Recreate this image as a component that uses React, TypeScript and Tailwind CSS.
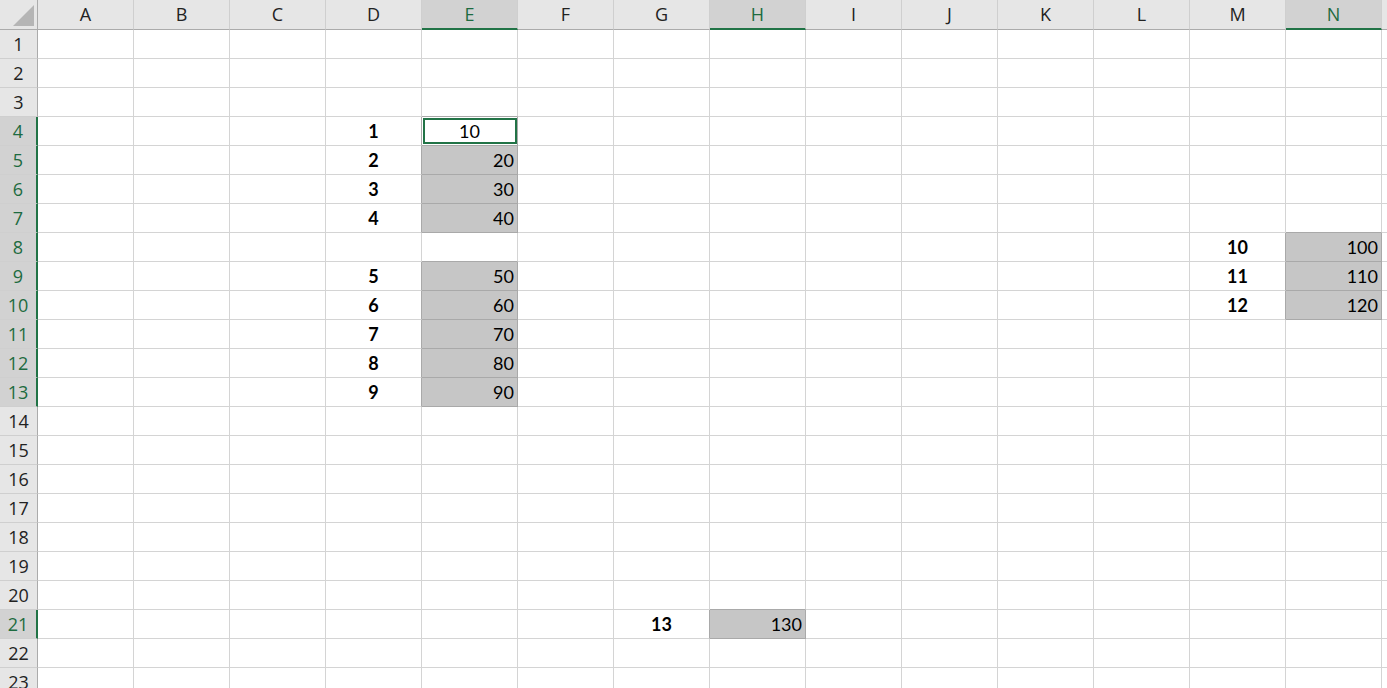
import React from 'react';

const COLS = 'ABCDEFGHIJKLMN'.split('');
const ROWS = Array.from({ length: 23 }, (_, i) => i + 1);

type CellData = { v: string; bold?: boolean; align: 'center' | 'right' };

const data: Record<string, CellData> = {
  D4: { v: '1', bold: true, align: 'center' },
  D5: { v: '2', bold: true, align: 'center' },
  D6: { v: '3', bold: true, align: 'center' },
  D7: { v: '4', bold: true, align: 'center' },
  D9: { v: '5', bold: true, align: 'center' },
  D10: { v: '6', bold: true, align: 'center' },
  D11: { v: '7', bold: true, align: 'center' },
  D12: { v: '8', bold: true, align: 'center' },
  D13: { v: '9', bold: true, align: 'center' },
  E4: { v: '10', align: 'center' },
  E5: { v: '20', align: 'right' },
  E6: { v: '30', align: 'right' },
  E7: { v: '40', align: 'right' },
  E9: { v: '50', align: 'right' },
  E10: { v: '60', align: 'right' },
  E11: { v: '70', align: 'right' },
  E12: { v: '80', align: 'right' },
  E13: { v: '90', align: 'right' },
  M8: { v: '10', bold: true, align: 'center' },
  M9: { v: '11', bold: true, align: 'center' },
  M10: { v: '12', bold: true, align: 'center' },
  N8: { v: '100', align: 'right' },
  N9: { v: '110', align: 'right' },
  N10: { v: '120', align: 'right' },
  G21: { v: '13', bold: true, align: 'center' },
  H21: { v: '130', align: 'right' },
};

const filled = new Set([
  'E5', 'E6', 'E7', 'E9', 'E10', 'E11', 'E12', 'E13', 'N8', 'N9', 'N10', 'H21',
]);
const inSel = (ci: number, r: number) => {
  if (ci < 0 || ci >= COLS.length) return false;
  const k = `${COLS[ci]}${r}`;
  return filled.has(k) || k === 'E4';
};

const selRows = new Set([4, 5, 6, 7, 8, 9, 10, 11, 12, 13, 21]);
const selCols = new Set(['E', 'H', 'N']);

function Cell({ ci, r }: { ci: number; r: number }) {
  const key = `${COLS[ci]}${r}`;
  const d = data[key];
  const isFilled = filled.has(key);
  const active = key === 'E4';
  const rDark = inSel(ci, r) || inSel(ci + 1, r);
  const bDark = inSel(ci, r) || inSel(ci, r + 1);
  const base =
    'relative w-[96px] shrink-0 h-full flex items-center border-r border-b ' +
    (rDark ? 'border-r-[#a9a9a9] ' : 'border-r-[#d4d4d4] ') +
    (bDark ? 'border-b-[#a9a9a9] ' : 'border-b-[#d4d4d4] ') +
    (isFilled ? 'bg-[#c6c6c6] ' : 'bg-white ') +
    (d && d.align === 'right' ? 'justify-end pr-[3px] ' : 'justify-center ');
  return (
    <div className={base}>
      {active && (
        <div className="absolute left-[1px] top-[1px] right-0 bottom-[1px] border-2 border-[#217346]" />
      )}
      {d && (
        <span
          className={
            "relative font-['Lato',sans-serif] text-[18px] leading-none text-black " +
            (d.bold ? 'font-bold' : 'font-normal')
          }
        >
          {d.v}
        </span>
      )}
    </div>
  );
}

export default function App() {
  return (
    <div className="w-[1387px] h-[688px] overflow-hidden bg-white flex flex-col">
      {/* column header */}
      <div className="flex h-[30px] shrink-0 bg-[#e6e6e6]">
        <div className="w-[38px] shrink-0 h-full border-r border-b border-[#ababab] relative">
          <svg width="37" height="29" className="absolute left-0 top-0">
            <polygon points="34,5 34,26 13,26" fill="#b5b5b5" />
          </svg>
        </div>
        {COLS.map((c) => {
          const s = selCols.has(c);
          return (
            <div
              key={c}
              className={
                "w-[96px] shrink-0 h-full flex items-center justify-center border-r border-r-[#cfcfcf] font-['Open_Sans',sans-serif] text-[18px] " +
                (s
                  ? 'bg-[#d2d2d2] border-b-2 border-b-[#217346] text-[#1d6b40]'
                  : 'border-b border-b-[#ababab] text-[#222]')
              }
            >
              {c}
            </div>
          );
        })}
        <div className="flex-1 h-full border-b border-b-[#ababab]" />
      </div>
      {ROWS.map((r) => {
        const s = selRows.has(r);
        return (
          <div key={r} className="flex h-[29px] shrink-0">
            <div
              className={
                "w-[38px] shrink-0 h-full flex items-center justify-center border-b border-b-[#cfcfcf] font-['Open_Sans',sans-serif] text-[18px] " +
                (s
                  ? 'bg-[#d2d2d2] border-r-2 border-r-[#217346] text-[#1d6b40]'
                  : 'bg-[#e6e6e6] border-r border-r-[#ababab] text-[#222]')
              }
            >
              {r}
            </div>
            {COLS.map((c, ci) => (
              <Cell key={c} ci={ci} r={r} />
            ))}
            <div className="flex-1 h-full border-b border-b-[#d4d4d4] bg-white" />
          </div>
        );
      })}
    </div>
  );
}
